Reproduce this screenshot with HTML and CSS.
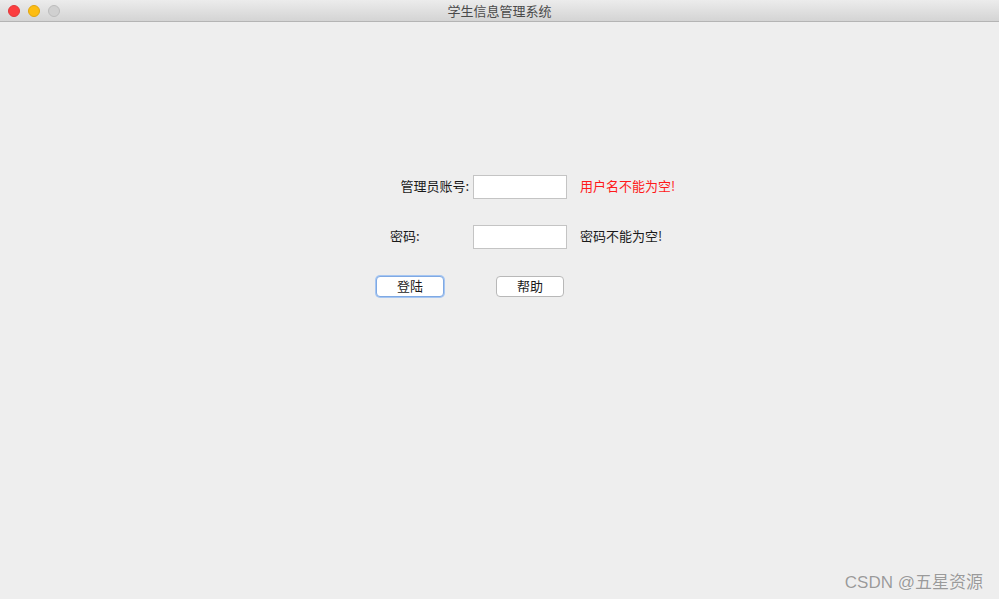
FILE: index.html
```html
<!DOCTYPE html>
<html lang="zh-CN">
<head>
    <meta charset="UTF-8">
    <title>学生信息管理系统</title>
    <link rel="stylesheet" href="styles.css">
</head>
<body>
    <div class="window">
        <div class="titlebar">
            <div class="lights">
                <span class="light close"></span>
                <span class="light min"></span>
                <span class="light max"></span>
            </div>
            <div class="title">学生信息管理系统</div>
        </div>
        <div class="content">
            <form class="login" onsubmit="return false">
                <label class="label label-user" for="user">管理员账号:</label>
                <input type="text" id="user" class="field">
                <span class="msg msg-error">用户名不能为空!</span>

                <label class="label label-pass" for="pass">密码:</label>
                <input type="password" id="pass" class="field">
                <span class="msg">密码不能为空!</span>
            </form>
            <div class="buttons">
                <button type="button" class="btn focused">登陆</button>
                <button type="button" class="btn">帮助</button>
            </div>
        </div>
        <div class="watermark">CSDN @五星资源</div>
    </div>
</body>
</html>
```

FILE: styles.css
```css
body {
    margin: 0;
    background-color: #eeeeee;
    font-family: "Noto Sans CJK SC", "Noto Sans", sans-serif;
    font-size: 13px;
    color: #1a1a1a;
}

.window {
    position: relative;
    width: 999px;
    height: 599px;
    overflow: hidden;
}

.titlebar {
    position: relative;
    height: 21px;
    background: linear-gradient(#ececec, #d4d4d4);
    border-bottom: 1px solid #b4b4b4;
    display: flex;
    align-items: center;
    justify-content: center;
}

.lights {
    position: absolute;
    left: 8px;
    top: 5px;
    display: flex;
    gap: 8px;
}

.light {
    width: 12px;
    height: 12px;
    border-radius: 50%;
    box-sizing: border-box;
}

.close {
    background-color: #fc3d3f;
    border: 1px solid #e0383a;
}

.min {
    background-color: #fdbd12;
    border: 1px solid #e0a50e;
}

.max {
    background-color: #d0d0d0;
    border: 1px solid #bcbcbc;
}

.title {
    color: #4a4a4a;
    font-size: 13px;
    line-height: 21px;
}

.content {
    padding: 153px 0 0 376px;
}

.login {
    display: grid;
    grid-template-columns: 97px 94px auto;
    grid-auto-rows: 24px;
    row-gap: 26px;
    align-items: center;
}

.label,
.msg {
    line-height: 22px;
    align-self: start;
}

.label-user {
    text-align: right;
    padding-right: 4px;
}

.label-pass {
    padding-left: 14px;
}

.field {
    box-sizing: border-box;
    width: 94px;
    height: 24px;
    margin: 0;
    border: 1px solid #c4c4c4;
    background: white;
    padding: 2px 4px;
    outline: none;
}

.msg {
    margin-left: 13px;
}

.msg-error {
    color: #ff1a1a;
}

.buttons {
    display: flex;
    gap: 52px;
    margin-top: 27px;
}

.btn {
    box-sizing: border-box;
    width: 68px;
    height: 21px;
    padding: 0 0 1px;
    background: white;
    border: 1px solid #b8b8b8;
    border-radius: 4px;
    font-family: inherit;
    font-size: 13px;
    line-height: 18px;
    color: #1a1a1a;
}

.btn.focused {
    border: 1px solid #7fa9e3;
    box-shadow: 0 0 0 1px #a6c6f2;
}

.watermark {
    position: absolute;
    right: 16px;
    bottom: 6px;
    font-family: "Liberation Sans", "Noto Sans CJK SC", sans-serif;
    font-size: 17px;
    color: #9a9a9a;
    text-shadow: 0 0 1px #ffffff;
}
```
